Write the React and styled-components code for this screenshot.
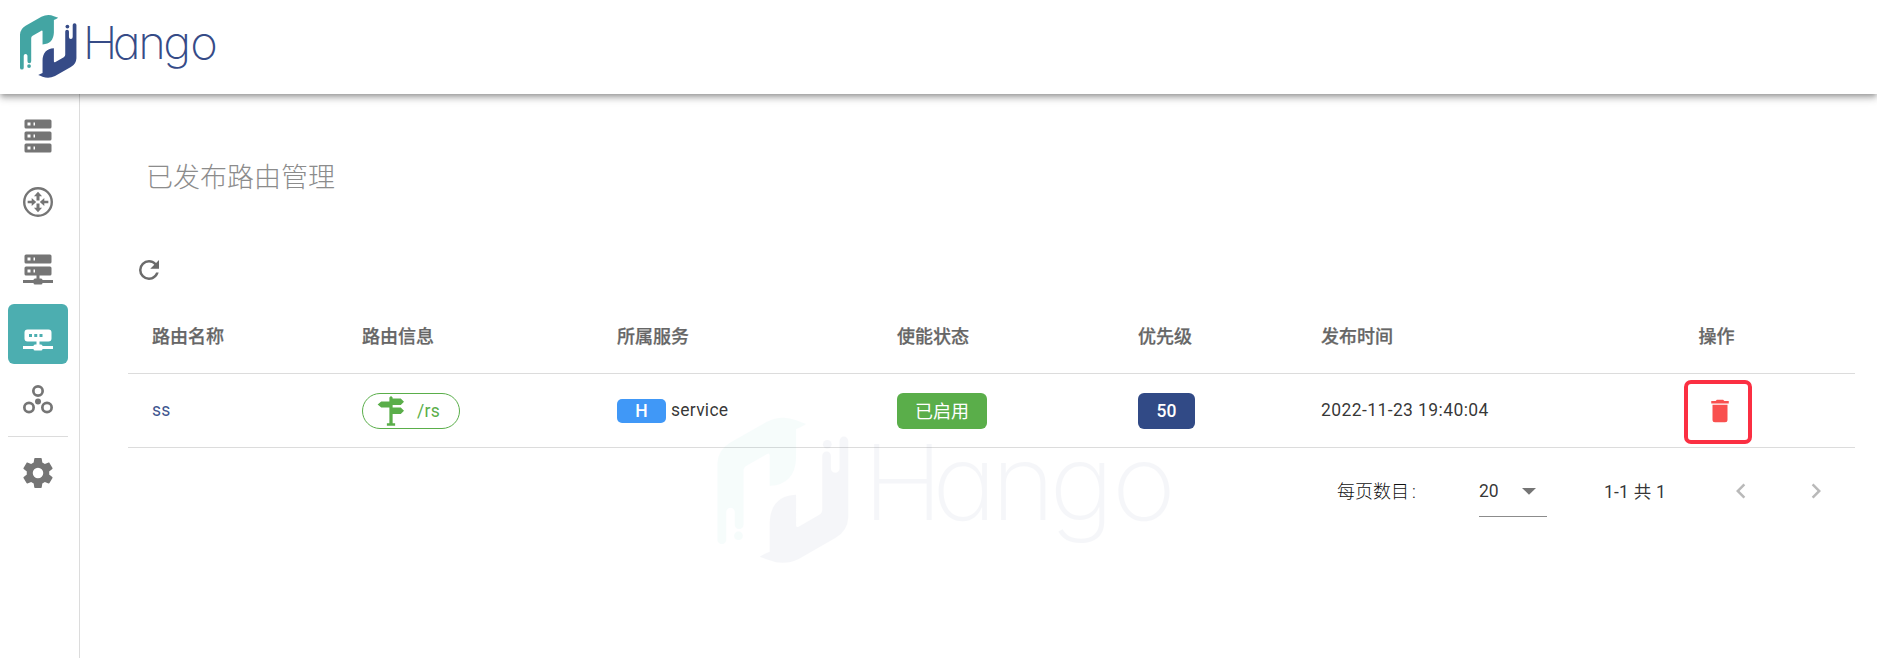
import React from 'react';
import styled, { createGlobalStyle } from 'styled-components';

const GlobalStyle = createGlobalStyle`
  * { box-sizing: border-box; }
  body {
    margin: 0;
    background: #fff;
    color: rgba(0, 0, 0, 0.8);
    font-family: Roboto, "Noto Sans CJK SC", sans-serif;
    font-size: 17.5px;
    overflow: hidden;
  }
`;

const Page = styled.div`
  display: flex;
  flex-direction: column;
  height: 658px;
`;

const TopBar = styled.header`
  flex: none;
  height: 94px;
  padding: 15px 20px;
  background: #fff;
  position: relative;
  z-index: 2;
  box-shadow: 0 2px 5px -1px rgba(0, 0, 0, 0.28), 0 5px 6px rgba(0, 0, 0, 0.15), 0 1px 12px rgba(0, 0, 0, 0.13);
`;

const Body = styled.div`
  flex: 1;
  display: flex;
  min-height: 0;
`;

const Sidebar = styled.nav`
  flex: none;
  width: 80px;
  padding: 12px 11px 0 8px;
  border-right: 1px solid #dcdcdc;
  display: flex;
  flex-direction: column;
  gap: 6px;
`;

const NavItem = styled.a`
  height: 60px;
  padding-bottom: 1px;
  display: flex;
  align-items: center;
  justify-content: center;
  border-radius: 6px;
  color: ${(p) => (p.$active ? '#fff' : '#757575')};
  background: ${(p) => (p.$active ? '#4caeb0' : 'transparent')};
`;

const NavDivider = styled.hr`
  width: 60px;
  height: 1px;
  margin: 0;
  border: 0;
  background: #dcdcdc;
`;

const Main = styled.main`
  flex: 1;
  padding: 0 22px 0 48px;
  position: relative;
`;

const Title = styled.h1`
  margin: 0;
  padding: 64px 0 0 18px;
  font-size: 27px;
  line-height: 40px;
  font-weight: 300;
  color: #8c8c8c;
`;

const Toolbar = styled.div`
  height: 30px;
  margin: 57px 0 14px 6px;
  display: flex;
  color: #6b6b6b;
`;

const Table = styled.table`
  width: 1727px;
  table-layout: fixed;
  border-collapse: separate;
  border-spacing: 0;
`;

const Th = styled.th`
  height: 75px;
  padding: 0 0 2px 24px;
  text-align: left;
  font-size: 18px;
  font-weight: 500;
  color: #666;
  -webkit-text-stroke: 0.25px #666;
  border-bottom: 1px solid #dcdcdc;
  ${(p) => p.$center && 'text-align: center; padding-left: 0;'}
`;

const Td = styled.td`
  height: 74px;
  padding: 0 0 0 24px;
  border-bottom: 1px solid #dcdcdc;
  ${(p) => p.$center && 'padding-left: 0;'}
`;

const CellRow = styled.div`
  display: flex;
  align-items: center;
  gap: 5px;
`;

const CellText = styled.span`
  display: block;
  letter-spacing: ${(p) => p.$spacing || 0}px;
  padding-bottom: 2px;
`;

const RouteLink = styled.a`
  display: block;
  padding-bottom: 2px;
  letter-spacing: 0.3px;
  color: #3f5690;
`;

const Chip = styled.span`
  display: inline-flex;
  vertical-align: middle;
  align-items: center;
  justify-content: center;
  width: ${(p) => p.$width}px;
  height: ${(p) => (p.$small ? 24 : 36)}px;
  padding-bottom: ${(p) => p.$lift || 0}px;
  border-radius: ${(p) => (p.$small ? 5 : 6)}px;
  background: ${(p) => p.$color};
  color: #fff;
  font-size: ${(p) => p.$size || 17.5}px;
  font-weight: ${(p) => p.$weight || 400};
`;

const PathChip = styled.span`
  display: inline-flex;
  vertical-align: middle;
  align-items: center;
  gap: 11px;
  width: 98px;
  height: 36px;
  padding-left: 13px;
  border: 1px solid #5aae4a;
  border-radius: 18px;
  color: #5aae4a;
  letter-spacing: 0.3px;
`;

const DeleteButton = styled.button`
  display: flex;
  align-items: center;
  justify-content: center;
  width: 68px;
  height: 64px;
  margin: 0 auto;
  padding: 0 0 2px 4px;
  position: relative;
  left: 1px;
  top: 1px;
  border: 4px solid #fb2f42;
  border-radius: 7px;
  background: transparent;
  color: #f9504f;
`;

const Pager = styled.footer`
  display: flex;
  align-items: center;
  height: 86px;
  padding-left: 1209px;
`;

const PagerLabel = styled.span`
  width: 142px;
  padding-bottom: 2px;
  font-size: 18px;
  font-weight: 300;
  color: #111;
`;

const Colon = styled.span`
  margin-left: 3px;
`;

const PageSize = styled.div`
  display: flex;
  align-items: center;
  justify-content: space-between;
  width: 68px;
  height: 52px;
  padding-right: 3px;
  margin-right: 57px;
  border-bottom: 1px solid #8c8c8c;
`;

const CaretSlot = styled.span`
  color: #757575;
`;

const PagerRange = styled.span`
  width: 122px;
  padding-bottom: 2px;
  letter-spacing: 0.2px;
`;

const PagerArrows = styled.div`
  display: flex;
  gap: 45px;
  color: #b9b9b9;
`;

const Watermark = styled.div`
  position: absolute;
  left: 637px;
  top: 324px;
  opacity: 0.045;
  pointer-events: none;
`;

const Glyph = styled.svg`
  display: block;
  flex: none;
  fill: currentColor;
`;

const Wordmark = styled.text`
  font-family: Inter, sans-serif;
  font-size: 298px;
  font-weight: 220;
  font-feature-settings: 'cv11';
`;

const icons = {
  server:
    'M4,1H20A1,1 0 0,1 21,2V6A1,1 0 0,1 20,7H4A1,1 0 0,1 3,6V2A1,1 0 0,1 4,1M4,9H20A1,1 0 0,1 21,10V14A1,1 0 0,1 20,15H4A1,1 0 0,1 3,14V10A1,1 0 0,1 4,9M4,17H20A1,1 0 0,1 21,18V22A1,1 0 0,1 20,23H4A1,1 0 0,1 3,22V18A1,1 0 0,1 4,17M9,5H10V3H9V5M9,13H10V11H9V13M9,21H10V19H9V21M5,3V5H7V3H5M5,11V13H7V11H5M5,19V21H7V19H5Z',
  router:
    'M12,2A10,10 0 0,1 22,12A10,10 0 0,1 12,22A10,10 0 0,1 2,12A10,10 0 0,1 12,2M12,3.6A8.4,8.4 0 0,0 3.6,12A8.4,8.4 0 0,0 12,20.4A8.4,8.4 0 0,0 20.4,12A8.4,8.4 0 0,0 12,3.6M12,5.2L14.7,8.2H13V11H11V8.2H9.3ZM12,18.8L9.3,15.8H11V13H13V15.8H14.7ZM5.1,11.2H7.8V9.3L10.8,12L7.8,14.7V12.8H5.1ZM18.9,11.2H16.2V9.3L13.2,12L16.2,14.7V12.8H18.9Z',
  serverNetwork:
    'M13,19H14A1,1 0 0,1 15,20H22V22H15A1,1 0 0,1 14,23H10A1,1 0 0,1 9,22H2V20H9A1,1 0 0,1 10,19H11V17H4A1,1 0 0,1 3,16V12A1,1 0 0,1 4,11H20A1,1 0 0,1 21,12V16A1,1 0 0,1 20,17H13V19M4,3H20A1,1 0 0,1 21,4V8A1,1 0 0,1 20,9H4A1,1 0 0,1 3,8V4A1,1 0 0,1 4,3M9,7H10V5H9V7M9,15H10V13H9V15M5,5V7H7V5H5M5,13V15H7V13H5Z',
  routerNetwork:
    'M5,9A2,2 0 0,0 3,11V15A2,2 0 0,0 5,17H11V19H10A1,1 0 0,0 9,20H2V22H9A1,1 0 0,0 10,23H14A1,1 0 0,0 15,22H22V20H15A1,1 0 0,0 14,19H13V17H19A2,2 0 0,0 21,15V11A2,2 0 0,0 19,9H5M6,12H8V14H6V12M9.5,12H11.5V14H9.5V12M13,12H15V14H13V12Z',
  bubbles:
    'M12,2A4,4 0 1,1 12,10A4,4 0 1,1 12,2M12,3.8A2.2,2.2 0 1,0 12,8.2A2.2,2.2 0 1,0 12,3.8M6,13A4,4 0 1,1 6,21A4,4 0 1,1 6,13M6,14.8A2.2,2.2 0 1,0 6,19.2A2.2,2.2 0 1,0 6,14.8M18,13A4,4 0 1,1 18,21A4,4 0 1,1 18,13M18,14.8A2.2,2.2 0 1,0 18,19.2A2.2,2.2 0 1,0 18,14.8M12,11A2,2 0 1,1 12,15A2,2 0 1,1 12,11Z',
  cog:
    'M12,15.5A3.5,3.5 0 0,1 8.5,12A3.5,3.5 0 0,1 12,8.5A3.5,3.5 0 0,1 15.5,12A3.5,3.5 0 0,1 12,15.5M19.43,12.97C19.47,12.65 19.5,12.33 19.5,12C19.5,11.67 19.47,11.34 19.43,11L21.54,9.37C21.73,9.22 21.78,8.95 21.66,8.73L19.66,5.27C19.54,5.05 19.27,4.96 19.05,5.05L16.56,6.05C16.04,5.66 15.5,5.32 14.87,5.07L14.5,2.42C14.46,2.18 14.25,2 14,2H10C9.75,2 9.54,2.18 9.5,2.42L9.13,5.07C8.5,5.32 7.96,5.66 7.44,6.05L4.95,5.05C4.73,4.96 4.46,5.05 4.34,5.27L2.34,8.73C2.21,8.95 2.27,9.22 2.46,9.37L4.57,11C4.53,11.34 4.5,11.67 4.5,12C4.5,12.33 4.53,12.65 4.57,12.97L2.46,14.63C2.27,14.78 2.21,15.05 2.34,15.27L4.34,18.73C4.46,18.95 4.73,19.03 4.95,18.95L7.44,17.94C7.96,18.34 8.5,18.68 9.13,18.93L9.5,21.58C9.54,21.82 9.75,22 10,22H14C14.25,22 14.46,21.82 14.5,21.58L14.87,18.93C15.5,18.67 16.04,18.34 16.56,17.94L19.05,18.95C19.27,19.03 19.54,18.95 19.66,18.73L21.66,15.27C21.78,15.05 21.73,14.78 21.54,14.63L19.43,12.97Z',
  refresh:
    'M17.65,6.35C16.2,4.9 14.21,4 12,4A8,8 0 0,0 4,12A8,8 0 0,0 12,20C15.73,20 18.84,17.45 19.73,14H17.65C16.83,16.33 14.61,18 12,18A6,6 0 0,1 6,12A6,6 0 0,1 12,6C13.66,6 15.14,6.69 16.22,7.78L13,11H20V4L17.65,6.35Z',
  sign:
    'M10.7,9.2H4.2L1.3,6.8L4.2,4.4H10.7V1.2L12,0L13.3,1.2V1.9H19.8L22.4,4.5L19.8,7.2H13.3V9.2H19.8L22.4,11.8L19.8,14.4H13.3V21.8H15.3V23.8H8.7V21.8H10.7V9.2Z',
  trash:
    'M19,4H15.5L14.5,3H9.5L8.5,4H5V6H19M6,19A2,2 0 0,0 8,21H16A2,2 0 0,0 18,19V7H6V19Z',
  left: 'M15.41,16.58L10.83,12L15.41,7.41L14,6L8,12L14,18L15.41,16.58Z',
  right: 'M8.59,16.58L13.17,12L8.59,7.41L10,6L16,12L10,18L8.59,16.58Z',
  caret: 'M6.4,9.5L12,15L17.6,9.5H6.4Z',
};

const Icon = ({ name, size = 30 }) => (
  <Glyph width={size} height={size} viewBox="0 0 24 24" aria-hidden="true">
    <path d={icons[name]} />
  </Glyph>
);

const ribbon =
  'M51,190Q53,149 90,128L200,65Q245,44 287,61Q303,67 317,72Q304,81 287,87V175Q284,254 208,258V166Q207,159 200,162L139,197Q129,203 129,213V375A13,13 0 0 1 103,375V337A13,13 0 0 0 77,337V420A13,13 0 0 1 51,420Z';

const Logo = ({ width, height, teal = '#43a5a3', navy = '#364b87' }) => (
  <Glyph width={width} height={height} viewBox="51 54 1365 436" overflow="visible">
    <g fill={teal}>
      <path d={ribbon} />
      <circle cx="114" cy="408" r="13" />
    </g>
    <g fill={navy} transform="rotate(180 247.5 271.5)">
      <path d={ribbon} />
      <circle cx="114" cy="410" r="13" />
    </g>
    <Wordmark
      fill={navy}
      transform="translate(488 360) scale(1.1 1.06)"
      x="0 190 351 510 681"
      y="0"
    >
      Hango
    </Wordmark>
  </Glyph>
);

const navItems = ['server', 'router', 'serverNetwork', 'routerNetwork', 'bubbles'];
const columns = [
  ['路由名称', 210],
  ['路由信息', 255],
  ['所属服务', 280],
  ['使能状态', 241],
  ['优先级', 183],
  ['发布时间', 281],
  ['操作', 277],
];

export default function App() {
  return (
    <Page>
      <GlobalStyle />
      <TopBar>
        <Logo width={196} height={63} />
      </TopBar>
      <Body>
        <Sidebar>
          {navItems.map((name) => (
            <NavItem key={name} $active={name === 'routerNetwork'}>
              <Icon name={name} size={36} />
            </NavItem>
          ))}
          <NavDivider />
          <NavItem>
            <Icon name="cog" size={36} />
          </NavItem>
        </Sidebar>
        <Main>
          <Title>已发布路由管理</Title>
          <Toolbar>
            <Icon name="refresh" />
          </Toolbar>
          <Table>
            <colgroup>
              {columns.map(([label, width]) => (
                <col key={label} width={width} />
              ))}
            </colgroup>
            <thead>
              <tr>
                {columns.map(([label]) => (
                  <Th key={label} $center={label === '操作'}>{label}</Th>
                ))}
              </tr>
            </thead>
            <tbody>
              <tr>
                <Td><RouteLink>ss</RouteLink></Td>
                <Td>
                  <PathChip>
                    <Icon name="sign" />
                    <span>/rs</span>
                  </PathChip>
                </Td>
                <Td>
                  <CellRow>
                    <Chip $small $width={49} $color="#4098f7" $weight={500}>H</Chip>
                    <CellText $spacing={0.25}>service</CellText>
                  </CellRow>
                </Td>
                <Td><Chip $width={90} $color="#5aae4a" $size={18} $lift={2}>已启用</Chip></Td>
                <Td><Chip $width={57} $color="#314a86" $weight={500}>50</Chip></Td>
                <Td><CellText $spacing={0.4}>2022-11-23 19:40:04</CellText></Td>
                <Td $center>
                  <DeleteButton aria-label="删除">
                    <Icon name="trash" />
                  </DeleteButton>
                </Td>
              </tr>
            </tbody>
          </Table>
          <Pager>
            <PagerLabel>每页数目<Colon>:</Colon></PagerLabel>
            <PageSize>
              <span>20</span>
              <CaretSlot><Icon name="caret" /></CaretSlot>
            </PageSize>
            <PagerRange>1-1 共 1</PagerRange>
            <PagerArrows>
              <Icon name="left" />
              <Icon name="right" />
            </PagerArrows>
          </Pager>
          <Watermark>
            <Logo width={455} height={145} teal="#3fc0bd" navy="#364b87" />
          </Watermark>
        </Main>
      </Body>
    </Page>
  );
}
